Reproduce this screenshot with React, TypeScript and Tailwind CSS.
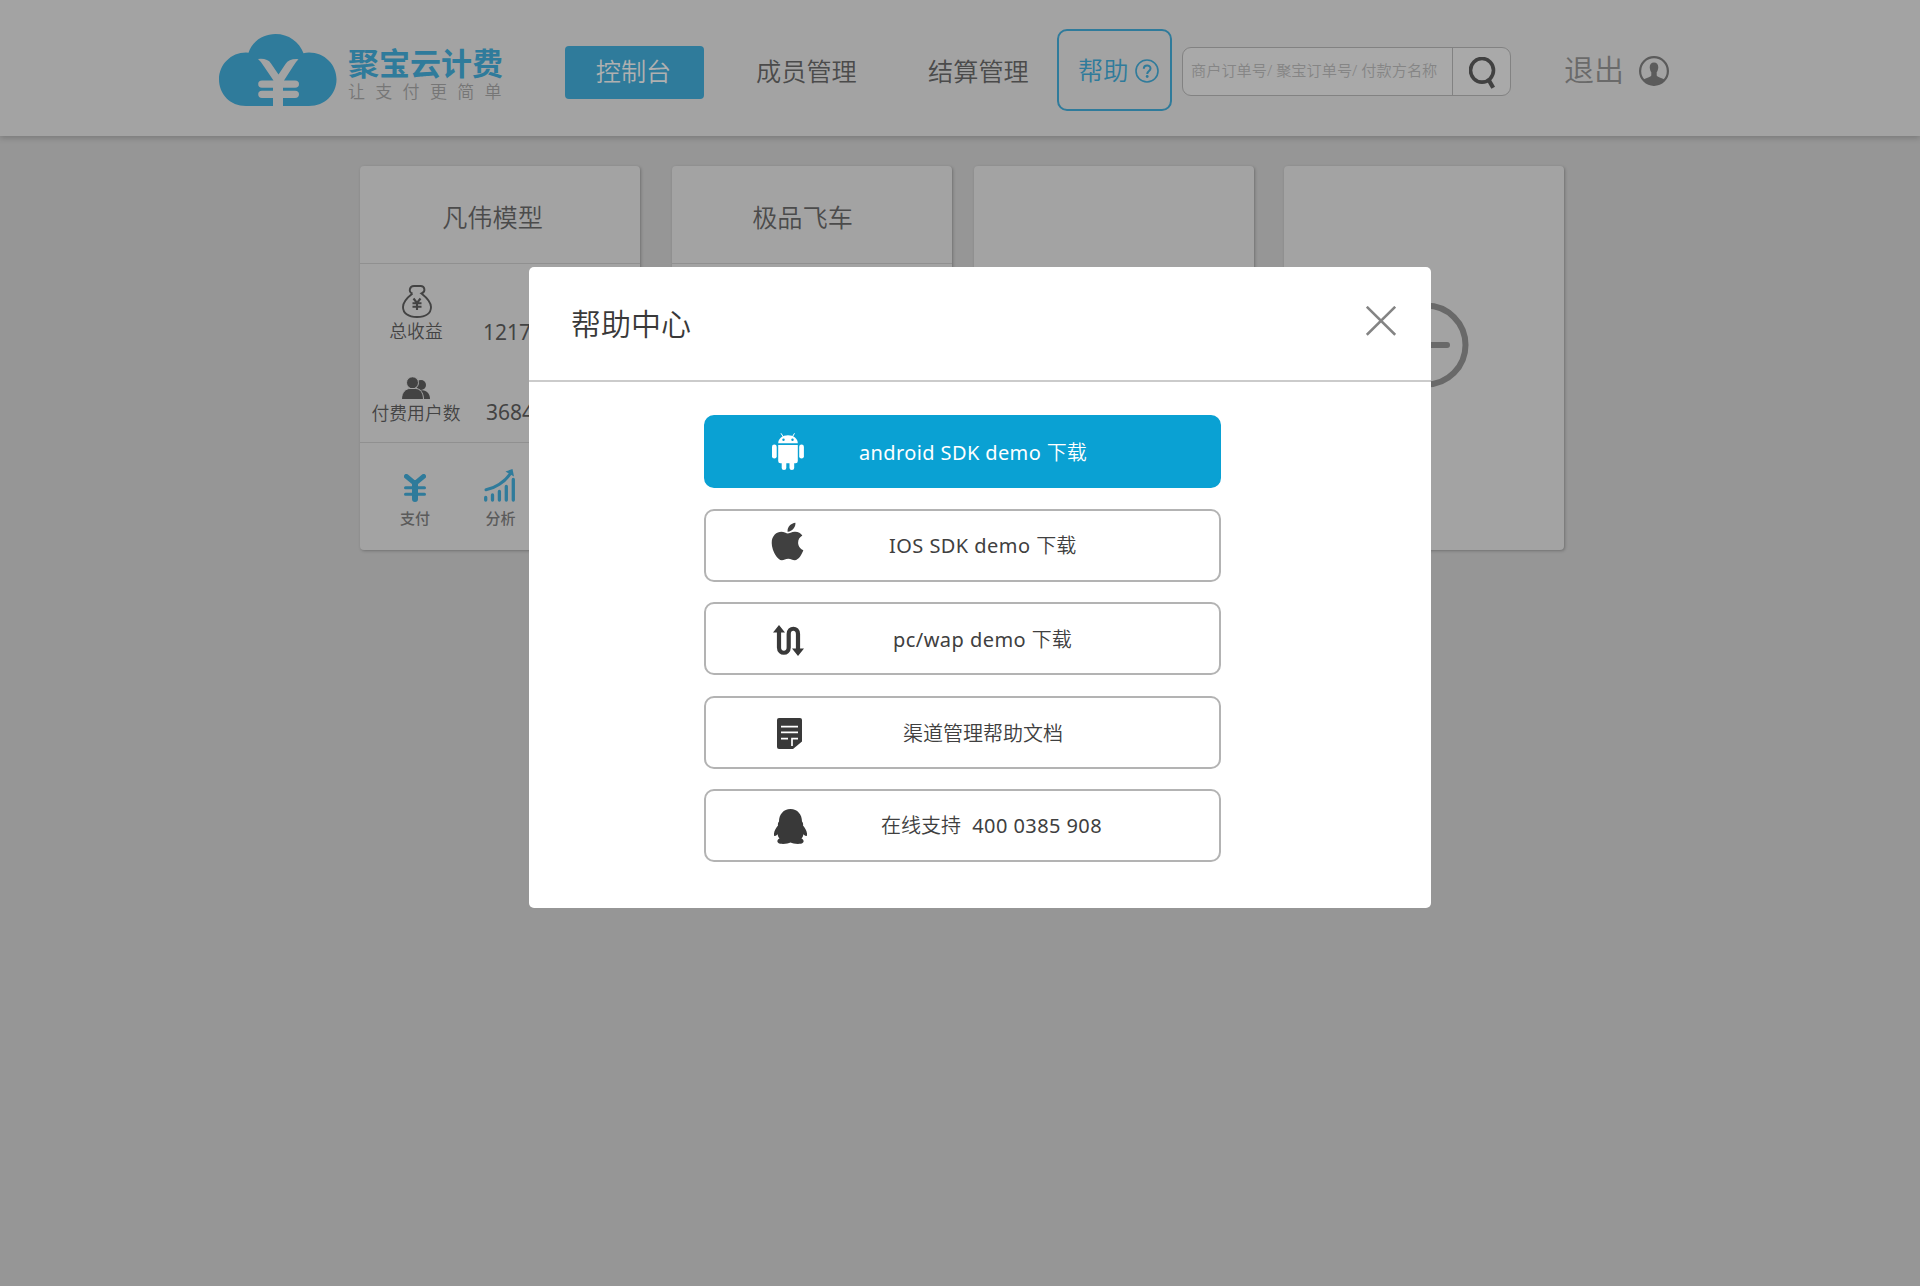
import React from "react";
import { FaApple } from "react-icons/fa";

function CloudLogo() {
  return (
    <svg className="h-[73px] w-[118px] shrink-0" viewBox="0 0 118 73">
      <path
        fill="#2f7b9b"
        d="M27 72C11 72 0 60 0 45.500C0 30.500 12 18.500 27 18.500Q28.500 18.500 29.500 18.700C33 7.500 44 0 56.500 0C69.500 0 80.500 8 84.500 19.200Q87 18.500 90 18.500C105.500 18.500 117.500 30.500 117.500 45.500C117.500 60 106 72 90 72Z"
      />
      <path
        fill="#a3a3a3"
        d="M39 25Q48.500 24 52 29.500L59.500 40.500L66.500 30Q70 24.500 79.500 25.200Q76.500 28 74 32.500L65 46.500H76Q80 46.500 80 50Q80 53.800 76 53.800H64V56.800H76Q80 56.800 80 60.300Q80 64 76 64H64V73H54V64H43Q39.200 64 39.200 60.300Q39.200 56.800 43 56.800H54V53.800H43Q39.200 53.800 39.200 50Q39.200 46.500 43 46.500H54.500L45 32.500Q42 27.500 39 25Z"
      />
    </svg>
  );
}

function QuestionIcon() {
  return (
    <svg className="h-6 w-6" viewBox="0 0 24 24" fill="none" stroke="#2f7b9b">
      <circle cx="12" cy="12" r="11" strokeWidth="1.600" />
      <path d="M8.800 9.800C8.800 5.500 15.500 5.600 15.500 9.500C15.500 12 12.200 12 12.200 15" strokeWidth="2" />
      <circle cx="12.200" cy="17.500" r="1.400" fill="#2f7b9b" stroke="none" />
    </svg>
  );
}

function SearchIcon() {
  return (
    <svg className="h-8 w-[27px]" viewBox="0 0 27 32" fill="none" stroke="#414141">
      <ellipse cx="13" cy="13.300" rx="11.500" ry="11.800" strokeWidth="3.600" />
      <path d="M20 23.500L24.200 30.800" strokeWidth="4.200" />
    </svg>
  );
}

function UserIcon() {
  return (
    <svg className="h-[30px] w-[30px]" viewBox="0 0 30 30">
      <circle cx="15" cy="15" r="13.900" fill="none" stroke="#5b5b5b" strokeWidth="2.200" />
      <path
        fill="#5b5b5b"
        d="M15 6.500C18 6.500 19.600 8.800 19.200 12C19 14 18.400 15.200 17.700 16.200V19.500C18 21.200 23 21.500 25.500 23.800C20 31 10 31 4.500 23.800C7 21.500 12 21.200 12.300 19.500V16.200C11.600 15.200 11 14 10.800 12C10.400 8.800 12 6.500 15 6.500Z"
      />
    </svg>
  );
}

function MoneyBagIcon() {
  return (
    <svg className="h-[33px] w-[30px]" viewBox="0 0 30 33" fill="none" stroke="#434343">
      <path
        strokeWidth="1.900"
        d="M10.500 8.500C6 7 7.500 1 12 1H18.500C23 1 24 7 19.500 8.500C24.500 12.500 29 16.500 29 22C29 28 24 32 15 32C6 32 1 28 1 22C1 16.500 6 12 10.500 8.500"
      />
      <path strokeWidth="2.100" d="M11.500 13.500L15 18L18.500 13.500M15 18V25M10.500 18.300H19.500M10.500 21.700H19.500" />
    </svg>
  );
}

function UsersIcon() {
  return (
    <svg className="h-[22px] w-7" viewBox="0 0 28 22" fill="#434343">
      <circle cx="19" cy="8" r="5" />
      <path d="M17 14C23 11.500 28 16 28 22H19Z" />
      <g stroke="#a3a3a3" strokeWidth="1">
        <circle cx="10.500" cy="5.800" r="6" />
        <path d="M-0.500 22.500C-0.500 15 4 11.500 8 11.500H13.500C18 11.500 21.500 15.500 21.500 22.500Z" />
      </g>
    </svg>
  );
}

function YenIcon() {
  return (
    <svg className="h-[28px] w-[22px]" viewBox="0 0 22 28" fill="none" stroke="#2f7b9b" strokeLinecap="round">
      <path d="M2.400 2.400L11 9.500L19.600 2.400" strokeWidth="4.800" />
      <path d="M11 9V25" strokeWidth="6" />
      <path d="M1.500 13.700H20.500M1.500 20.300H20.500" strokeWidth="3" />
    </svg>
  );
}

function ChartIcon() {
  return (
    <svg className="h-[33px] w-[31px]" viewBox="0 0 31 33" fill="none" stroke="#2f7b9b" strokeLinecap="round">
      <path d="M1.700 28.500V31M8.500 26V31M15.400 22.500V31M22.300 17.500V31M29.300 10.500V31" strokeWidth="3.300" />
      <path d="M2 20.800C11 19.500 20.500 13 26.500 4.500" strokeWidth="3" />
      <path d="M21.500 2.500L28.500 0L30 7.500Z" fill="#2f7b9b" stroke="none" />
    </svg>
  );
}

function AndroidIcon() {
  return (
    <svg className="h-[37px] w-[32px]" viewBox="0 0 32 37" fill="#fff">
      <path d="M6.200 10.200C6.200 5.500 10.500 2.200 16 2.200C21.500 2.200 25.800 5.500 25.800 10.200Z" />
      <path d="M9 0.300L11.500 4.200M22.500 0.300L20.200 4.200" stroke="#fff" strokeWidth="1" />
      <circle cx="11.500" cy="6.800" r="1.200" fill="#0aa1d3" />
      <circle cx="20.500" cy="6.800" r="1.200" fill="#0aa1d3" />
      <path d="M6.200 12H25.800V28Q25.800 30.200 23.600 30.200H22.200V35Q22.200 37 19.900 37Q17.500 37 17.500 35V30.200H14.300V35Q14.300 37 12 37Q9.700 37 9.700 35V30.200H8.400Q6.200 30.200 6.200 28Z" />
      <rect x="0" y="11.500" width="4.700" height="14" rx="2.300" />
      <rect x="27.200" y="11.500" width="4.700" height="14" rx="2.300" />
    </svg>
  );
}

function RouteIcon() {
  return (
    <svg className="h-[31px] w-[31px]" viewBox="0 0 31 31" fill="none" stroke="#393939">
      <path d="M6 7V22.500C6 29.500 15.700 29.500 15.700 22.500V9C15.700 2 25 2 25 9V24" strokeWidth="4.200" />
      <path d="M6 0L12 7.500H0ZM25 31L19 23.500H31Z" fill="#393939" stroke="none" />
    </svg>
  );
}

function DocIcon() {
  return (
    <svg className="h-[31px] w-[25px]" viewBox="0 0 25 31">
      <path fill="#393939" d="M2 0H23Q25 0 25 2V23.500L16 31H2Q0 31 0 29V2Q0 0 2 0Z" />
      <path fill="none" stroke="#fff" strokeWidth="1.700" d="M4 8.700H21M4 14.400H21M4 20.700H11M21 20.700H15V28" />
    </svg>
  );
}

function PenguinIcon() {
  return (
    <svg className="h-[35px] w-[33px]" viewBox="0 0 33 35">
      <path
        fill="#393939"
        d="M16.500 0C23.500 0 28 5.500 28 12.500Q29.500 14 29 16.500C31.500 19 34 24.500 32.700 27Q31 27.500 29.500 25.300Q29 28 27.500 29.500C30.500 31 30.500 34.300 26.500 34.800C22.500 35.300 18.500 34.500 16.500 33.500C14.500 34.500 10.500 35.300 6.500 34.800C2.500 34.300 2.500 31 5.500 29.500Q4 28 3.500 25.300Q2 27.500 0.300 27C-1 24.500 1.500 19 4 16.500Q3.500 14 5 12.500C5 5.500 9.500 0 16.500 0Z"
      />
    </svg>
  );
}

function CloseIcon() {
  return (
    <svg className="h-[30px] w-[30px]" viewBox="0 0 30 30" fill="none" stroke="#848484" strokeWidth="2.600">
      <path d="M0.800 0.800L29.200 28.700M29.200 0.800L0.800 28.700" />
    </svg>
  );
}

function AddIcon() {
  return (
    <svg className="h-[86px] w-[86px]" viewBox="0 0 86 86" fill="none" stroke="#696969" strokeWidth="6" strokeLinecap="round">
      <circle cx="43" cy="43" r="39.500" />
      <path d="M22 43H64M43 22V64" />
    </svg>
  );
}

const cardClass =
  "h-[384px] shrink-0 rounded bg-[#a3a3a3] shadow-[1px_1px_3px_rgba(0,0,0,0.25)]";

function StatCard({
  title,
  titleClass,
  earnings,
  payers,
}: {
  title: string;
  titleClass: string;
  earnings?: string;
  payers?: string;
}) {
  return (
    <section className={`${cardClass} w-[280px]`}>
      <h2
        className={`flex h-[98px] items-center justify-center border-b border-[#909090] pt-[6px] text-[25.200px] font-[350] text-[#4b4b4b] ${titleClass}`}
      >
        {title}
      </h2>
      {earnings && (
        <>
          <div className="h-[179px] border-b border-[#909090] text-[#434343]">
            <div className="flex h-[90px] pt-[21px]">
              <div className="flex w-[112px] flex-col items-center">
                <div className="ml-[2px]">
                  <MoneyBagIcon />
                </div>
                <span className="text-[17.800px] leading-[26px] font-[350]">总收益</span>
              </div>
              <span className="ml-[11px] mt-[33px] text-[21px] leading-[28px]">{earnings}</span>
            </div>
            <div className="flex h-[88px] pt-[23px]">
              <div className="flex w-[112px] flex-col items-center">
                <UsersIcon />
                <span className="mt-px text-[17.800px] leading-[26px] font-[350]">付费用户数</span>
              </div>
              <span className="ml-[14px] mt-[21px] text-[21px] leading-[28px]">{payers}</span>
            </div>
          </div>
          <div className="flex pt-[26px] text-[15px] font-medium text-[#5b5b5b]">
            <div className="flex w-[110px] flex-col items-center">
              <div className="flex h-[33px] items-end">
                <YenIcon />
              </div>
              <span className="mt-[5px] leading-[22px]">支付</span>
            </div>
            <div className="ml-[13px] flex w-8 flex-col items-center">
              <ChartIcon />
              <span className="ml-[3px] mt-[5px] whitespace-nowrap leading-[22px]">分析</span>
            </div>
          </div>
        </>
      )}
    </section>
  );
}

function HelpItem({
  icon,
  iconClass,
  labelClass,
  active,
  children,
}: {
  icon: React.ReactNode;
  iconClass: string;
  labelClass: string;
  active?: boolean;
  children: React.ReactNode;
}) {
  return (
    <button
      className={`flex h-[73px] w-[517px] items-start rounded-[10px] border-2 text-left text-[20px] leading-[28px] font-[350] ${
        active ? "border-[#0aa1d3] bg-[#0aa1d3] text-white" : "border-[#b3b3b3] bg-white text-[#404040]"
      }`}
    >
      <span className="flex h-full w-[120px] shrink-0">
        <span className={iconClass}>{icon}</span>
      </span>
      <span className={`whitespace-pre ${labelClass}`}>{children}</span>
    </button>
  );
}

export default function App() {
  return (
    <div
      lang="zh-CN"
      className="relative h-[1286px] w-[1920px] overflow-hidden bg-[#969696] font-['Noto_Sans','Noto_Sans_CJK_SC',sans-serif]"
    >
      <header className="flex h-[136px] items-start bg-[#a3a3a3] shadow-[0_2px_6px_rgba(0,0,0,0.2)]">
        <div className="ml-[219px] mt-[34px] flex w-[346px] shrink-0">
          <CloudLogo />
          <div className="ml-[11px] mt-[6px]">
            <div className="text-[31px] leading-[46px] font-bold text-[#2f7b9b]">聚宝云计费</div>
            <div className="-mt-[7px] whitespace-nowrap text-[17px] leading-[25px] font-[350] tracking-[10.300px] text-[#767676]">
              让支付更简单
            </div>
          </div>
        </div>
        <nav className="flex shrink-0 items-start text-[25.200px] font-[350] text-[#4b4b4b]">
          <a className="mt-[46px] flex h-[53px] w-[139px] items-center justify-center rounded bg-[#2f7b9b] pb-0.5 pr-[2px] text-[#b0b0b0]">
            控制台
          </a>
          <a className="ml-[52px] mt-[46px] w-[101px] leading-[50px]">成员管理</a>
          <a className="ml-[71px] mt-[46px] w-[101px] leading-[50px]">结算管理</a>
          <a className="ml-[28px] mt-[29px] flex h-[82px] w-[115px] items-center rounded-[10px] border-2 border-[#2f7b9b] pl-[19px] pt-[2px] text-[#2f7b9b]">
            <span className="mr-[7px] pb-px">帮助</span>
            <QuestionIcon />
          </a>
        </nav>
        <div className="ml-[10px] mt-[47px] flex h-[49px] w-[329px] shrink-0 rounded-[9px] border border-[#828282] bg-[#a9a9a9]">
          <div className="flex w-[270px] items-center whitespace-pre border-r border-[#828282] pl-[8px] pb-[2px] text-[15.200px] font-[350] text-[#858585]">
            商户订单号/ 聚宝订单号/ 付款方名称
          </div>
          <div className="pl-4 pt-[9px]">
            <SearchIcon />
          </div>
        </div>
        <div className="ml-[53px] mt-[46px] flex shrink-0 items-start text-[30px] leading-[48px] font-[350] text-[#6a6a6a]">
          退出
          <span className="ml-[15px] mt-[10px]">
            <UserIcon />
          </span>
        </div>
      </header>

      <main className="flex pl-[360px] pt-[30px]">
        <StatCard title="凡伟模型" titleClass="pr-[15px]" earnings="1217" payers="3684" />
        <div className="ml-8">
          <StatCard title="极品飞车" titleClass="pr-[19px]" />
        </div>
        <section className={`${cardClass} ml-[22px] w-[280px]`} />
        <section className={`${cardClass} ml-[30px] flex w-[280px] justify-center pl-[3px] pt-[136px]`}>
          <AddIcon />
        </section>
      </main>

      <div role="dialog" className="absolute left-[529px] top-[267px] h-[641px] w-[902px] rounded-[5px] bg-white">
        <div className="flex h-[115px] items-start justify-between border-b-2 border-[#cbcbcb] pl-[42px] pr-[35px]">
          <h1 className="mt-[33px] text-[30px] leading-[48px] font-[350] text-[#393939]">帮助中心</h1>
          <button className="mt-[39px]">
            <CloseIcon />
          </button>
        </div>
        <div className="flex flex-col gap-[20.500px] pl-[175px] pt-[33px]">
          <HelpItem active icon={<AndroidIcon />} iconClass="ml-[66px] mt-[16px]" labelClass="ml-[33px] mt-[22px]">
            <span className="font-normal tracking-[0.380px]">android SDK demo </span>下载
          </HelpItem>
          <HelpItem
            icon={<FaApple className="h-[43px] w-[33px]" />}
            iconClass="ml-[65px] mt-[9px]"
            labelClass="ml-[63px] mt-[21px]"
          >
            <span className="font-normal tracking-[0.450px]">IOS SDK demo </span>下载
          </HelpItem>
          <HelpItem icon={<RouteIcon />} iconClass="ml-[67px] mt-[21px]" labelClass="ml-[67px] mt-[22px]">
            <span className="font-normal tracking-[0.450px]">pc/wap demo </span>下载
          </HelpItem>
          <HelpItem icon={<DocIcon />} iconClass="ml-[71px] mt-[20px]" labelClass="ml-[77px] mt-[22px]">
            渠道管理帮助文档
          </HelpItem>
          <HelpItem icon={<PenguinIcon />} iconClass="ml-[68px] mt-[18px]" labelClass="ml-[55px] mt-[21px]">
            在线支持<span className="font-normal tracking-[0.420px]">{"  400 0385 908"}</span>
          </HelpItem>
        </div>
      </div>
    </div>
  );
}
